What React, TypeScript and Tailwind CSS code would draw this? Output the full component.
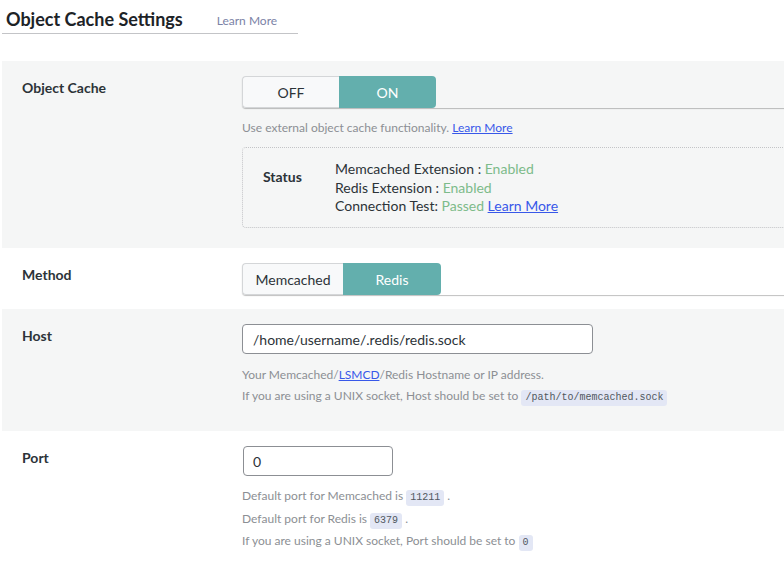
import React from "react";

const font = { fontFamily: "Lato, 'Noto Sans', sans-serif" };

function Code({ children }: { children: React.ReactNode }) {
  return (
    <code className="inline-block rounded-[3px] bg-[#e3e7f5] px-[4px] leading-[16px] text-[10px] text-[#50575e] [font-family:'Liberation_Mono',monospace]">
      {children}
    </code>
  );
}

function Toggle({
  left,
  right,
  lw,
  rw,
}: {
  left: string;
  right: string;
  lw: string;
  rw: string;
}) {
  return (
    <div className="flex h-[32px] rounded-[4px] shadow-[0_1px_1px_rgba(0,0,0,0.25)]">
      <div
        className={`${lw} flex items-center justify-center rounded-l-[4px] border border-r-0 border-[#d4d6d8] bg-[#f8f9fa] text-[14px] text-[#2c3338]`}
      >
        {left}
      </div>
      <div
        className={`${rw} flex items-center justify-center rounded-r-[4px] bg-[#63afad] text-[14px] text-white`}
      >
        {right}
      </div>
    </div>
  );
}

function Row({
  label,
  gray,
  children,
  className = "",
}: {
  label: string;
  gray?: boolean;
  children: React.ReactNode;
  className?: string;
}) {
  return (
    <div className={`flex ${gray ? "bg-[#f5f6f6]" : "bg-white"} ${className}`}>
      <div className="w-[240px] shrink-0 pl-[20px] pt-[17px] text-[14px] font-bold leading-[20px] text-[#2c3338]">
        {label}
      </div>
      <div className="flex-1 pt-[15px]">{children}</div>
    </div>
  );
}

export default function App() {
  return (
    <div className="h-[566px] w-[784px] overflow-hidden bg-white" style={font}>
      <div className="ml-[2px] mt-[8px] flex w-[296px] items-end border-b border-[#c3c4c7] pb-[3px]">
        <h1 className="pl-[4px] text-[18px] font-bold leading-[22px] text-[#1d2327]">
          Object Cache Settings
        </h1>
        <a className="ml-[34px] pb-[1px] text-[12px] leading-[16px] text-[#7b82a6]">
          Learn More
        </a>
      </div>

      <div className="ml-[2px] mt-[27px] w-[900px]">
        <Row label="Object Cache" gray className="h-[187px]">
          <Toggle left="OFF" right="ON" lw="w-[97px]" rw="w-[97px]" />
          <p className="mt-[12px] text-[12px] leading-[16px] text-[#8c8f94]">
            Use external object cache functionality.{" "}
            <a className="text-[#3858e9] underline">Learn More</a>
          </p>
          <div className="mt-[11px] flex h-[81px] w-[600px] items-start rounded-[4px] border border-dotted border-[#c3c4c7]">
            <div className="w-[92px] shrink-0 pl-[20px] pt-[20px] text-[14px] font-bold leading-[18.5px] text-[#2c3338]">
              Status
            </div>
            <div className="pt-[12px] text-[14px] leading-[18.5px] text-[#2c3338]">
              <div>
                Memcached Extension : <span className="text-[#7dbb8a]">Enabled</span>
              </div>
              <div>
                Redis Extension : <span className="text-[#7dbb8a]">Enabled</span>
              </div>
              <div>
                Connection Test: <span className="text-[#7dbb8a]">Passed</span>{" "}
                <a className="text-[#3858e9] underline">Learn More</a>
              </div>
            </div>
          </div>
        </Row>

        <Row label="Method" className="h-[61px]">
          <Toggle left="Memcached" right="Redis" lw="w-[101px]" rw="w-[98px]" />
        </Row>

        <Row label="Host" gray className="h-[122px]">
          <div className="flex h-[30px] w-[351px] items-center rounded-[4px] border border-[#8c8f94] bg-white pl-[10px] text-[14px] text-[#2c3338]">
            /home/username/.redis/redis.sock
          </div>
          <div className="mt-[10px] text-[12px] leading-[21px] text-[#8c8f94]">
            <div>
              Your Memcached/<a className="text-[#3858e9] underline">LSMCD</a>/Redis Hostname or IP address.
            </div>
            <div>
              If you are using a UNIX socket, Host should be set to{" "}
              <Code>/path/to/memcached.sock</Code>
            </div>
          </div>
        </Row>

        <Row label="Port" className="h-[135px]">
          <div className="ml-[1px] flex h-[30px] w-[150px] items-center rounded-[4px] border border-[#8c8f94] bg-white pl-[9px] text-[14px] text-[#2c3338]">
            0
          </div>
          <div className="mt-[9px] text-[12px] leading-[22.5px] text-[#8c8f94]">
            <div>
              Default port for Memcached is <Code>11211</Code> .
            </div>
            <div>
              Default port for Redis is <Code>6379</Code> .
            </div>
            <div>
              If you are using a UNIX socket, Port should be set to <Code>0</Code>
            </div>
          </div>
        </Row>
      </div>
    </div>
  );
}
